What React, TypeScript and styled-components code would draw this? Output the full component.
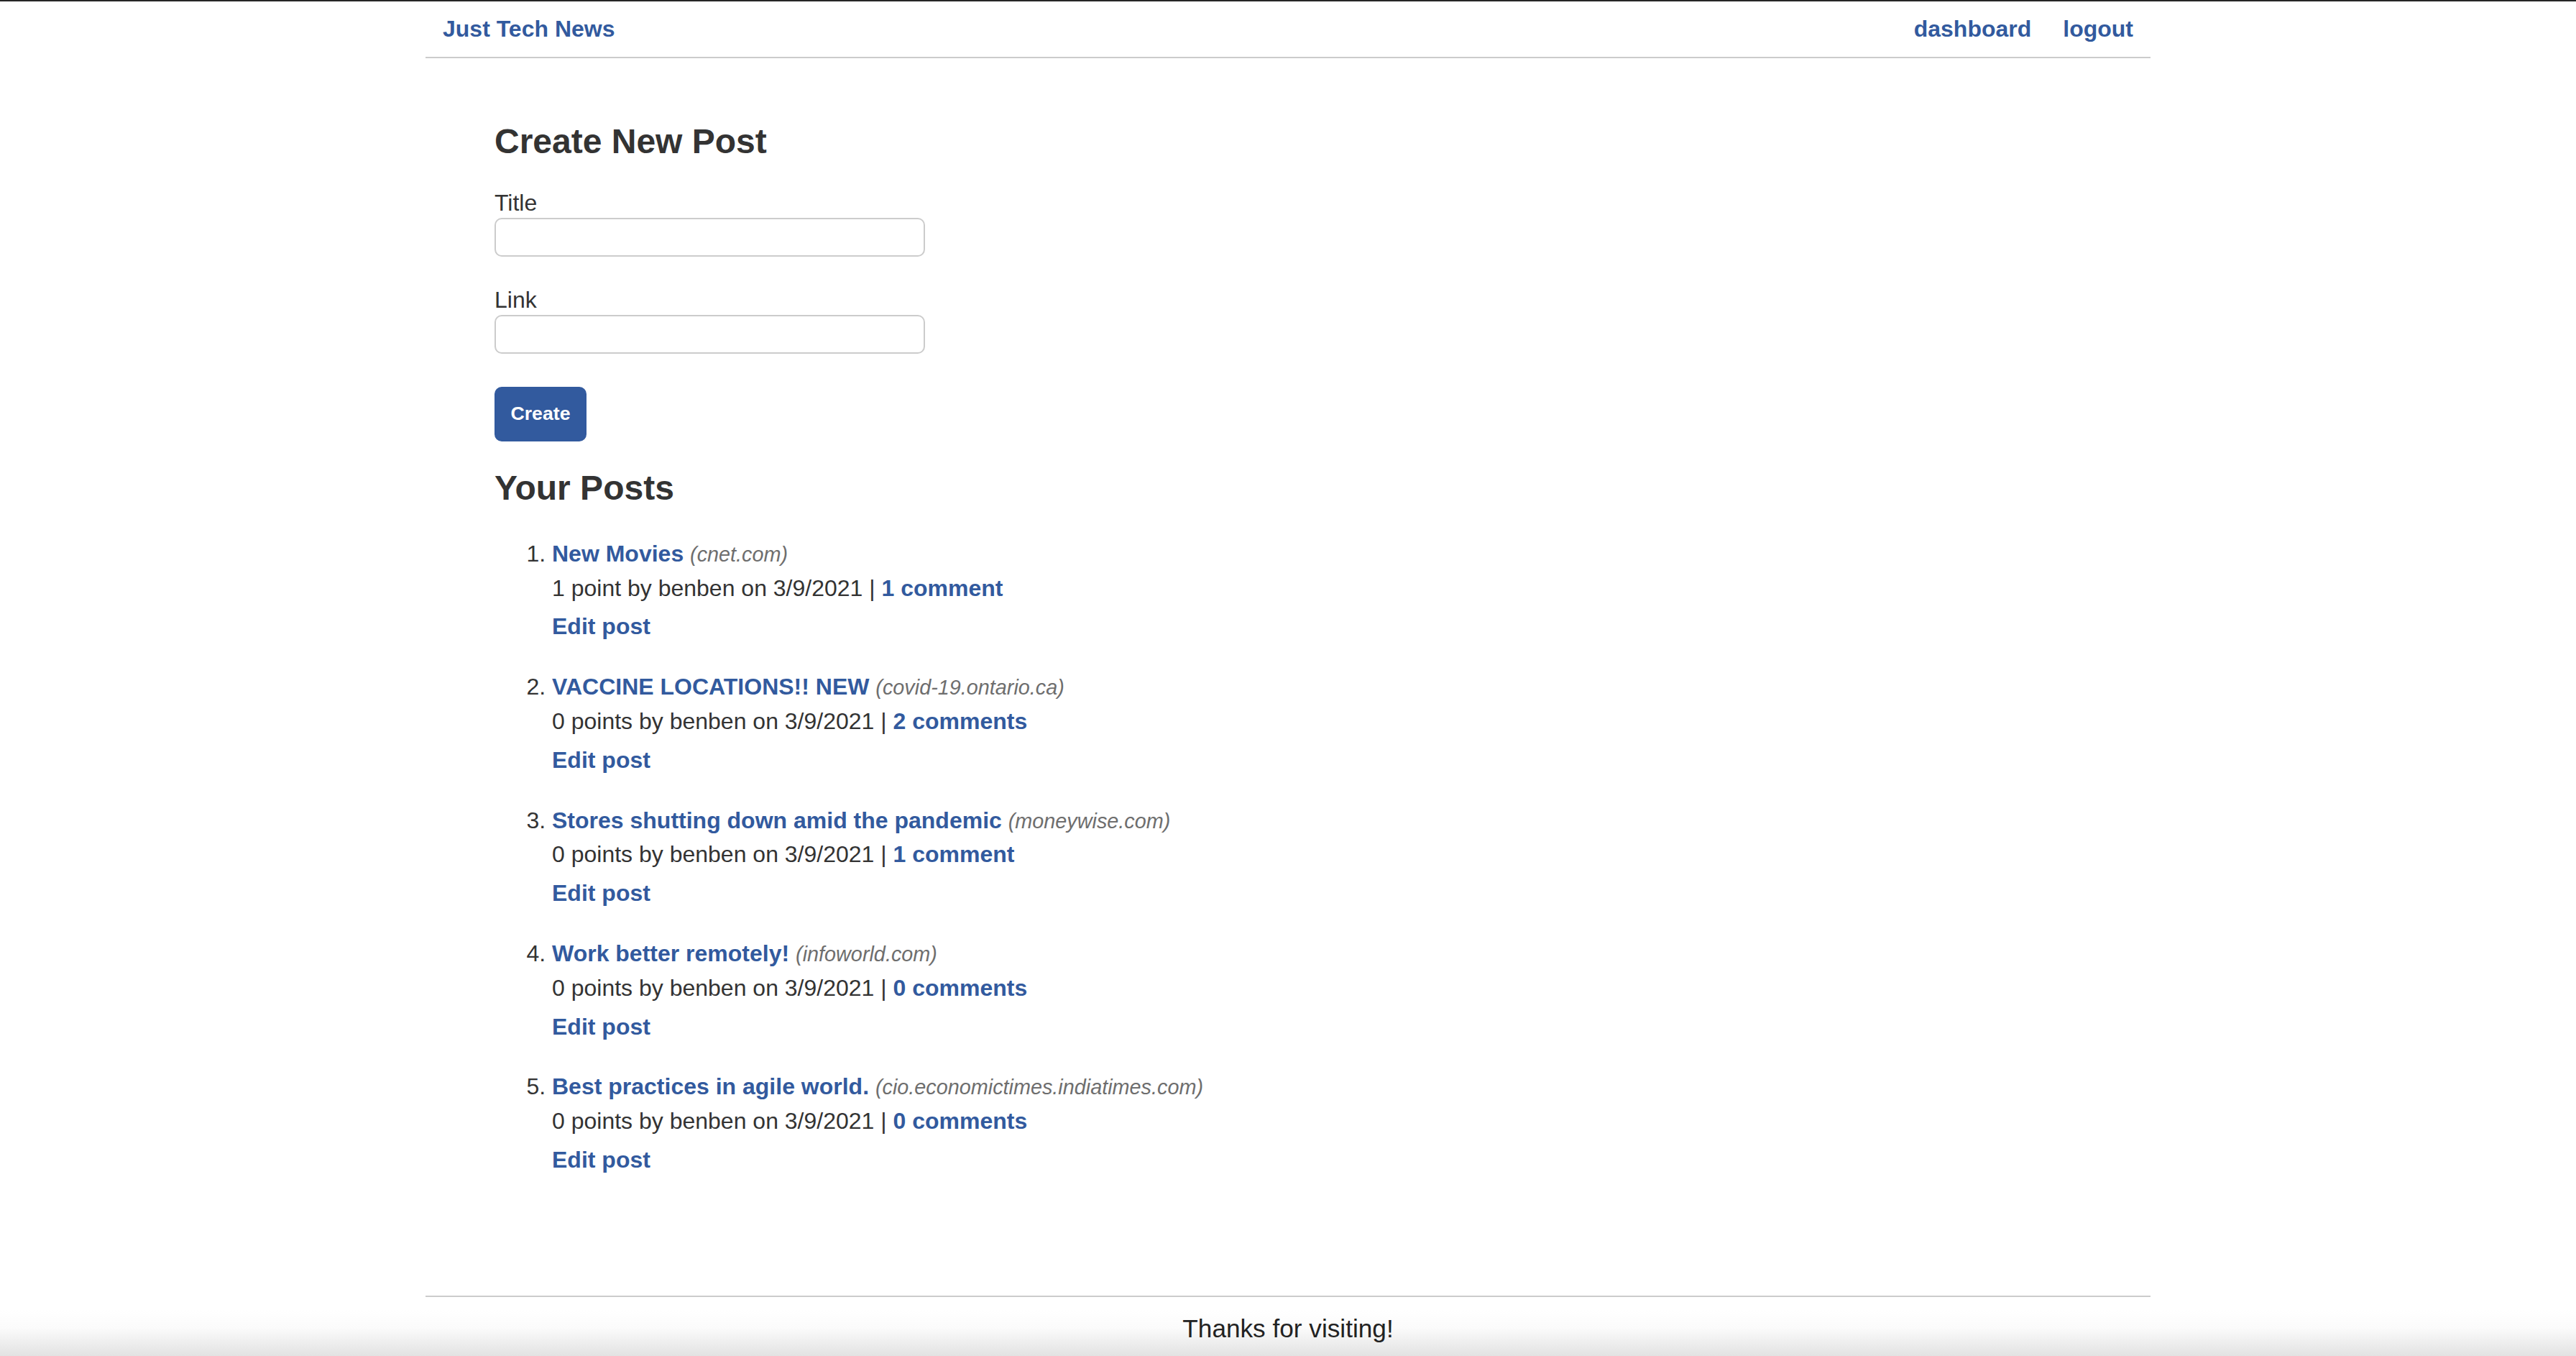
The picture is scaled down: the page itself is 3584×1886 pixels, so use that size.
import React from "react";
import styled, { createGlobalStyle } from "styled-components";

const GlobalStyle = createGlobalStyle`
  *, *::before, *::after { box-sizing: border-box; }
  html, body { margin: 0; padding: 0; background: #ffffff; }
  body {
    font-family: "Liberation Sans", Arial, Helvetica, sans-serif;
    font-size: 32px;
    line-height: 1.15;
    color: #333333;
  }
`;

const BLUE = "#325a9e";

const Page = styled.div`
  min-height: 100vh;
  display: flex;
  flex-direction: column;
  border-top: 2px solid #262626;
`;

const Header = styled.header`
  width: 2400px;
  margin: 0 auto;
  padding: 20px 24px 20px;
  display: flex;
  align-items: center;
  justify-content: space-between;
  border-bottom: 2px solid #cccccc;
`;

const Brand = styled.a`
  font-weight: bold;
  font-size: 32px;
  color: ${BLUE};
  text-decoration: none;
`;

const Nav = styled.nav`
  display: flex;
  gap: 44px;
`;

const NavLink = styled.a`
  font-weight: bold;
  font-size: 32px;
  color: ${BLUE};
  text-decoration: none;
`;

const Main = styled.main`
  flex: 1;
  width: 2400px;
  margin: 0 auto;
  padding: 88px 96px 0;
`;

const Heading = styled.h2<{ $top?: number }>`
  margin: ${(p) => p.$top ?? 0}px 0 0;
  font-size: 48px;
  font-weight: bold;
  line-height: 1.15;
  color: #333333;
`;

const Form = styled.form`
  margin-top: 40px;
  display: flex;
  flex-direction: column;
  align-items: flex-start;
`;

const Field = styled.div`
  margin-bottom: 42px;
  &:last-of-type { margin-bottom: 0; }
`;

const Label = styled.label`
  display: block;
  font-size: 32px;
  color: #333333;
`;

const Input = styled.input`
  display: block;
  margin-top: 2px;
  width: 599px;
  height: 54px;
  border: 2px solid #cccccc;
  border-radius: 10px;
  background: #ffffff;
  font-family: inherit;
  font-size: 26px;
  padding: 0 10px;
  outline: none;
`;

const Button = styled.button`
  margin-top: 46px;
  width: 128px;
  height: 76px;
  border: none;
  border-radius: 10px;
  background: ${BLUE};
  color: #ffffff;
  font-family: "Liberation Sans", Arial, Helvetica, sans-serif;
  font-weight: bold;
  font-size: 26.67px;
  cursor: pointer;
`;

const PostList = styled.ol`
  margin: 46px 0 0;
  padding-left: 80px;
  font-size: 32px;
  color: #333333;
`;

const PostItem = styled.li`
  line-height: 1.15;
  & + & { margin-top: 47px; }
`;

const TitleLine = styled.div``;

const PostLink = styled.a`
  font-weight: bold;
  color: ${BLUE};
  text-decoration: none;
`;

const Domain = styled.span`
  font-style: italic;
  font-size: 28.8px;
  color: #6e6e6e;
`;

const Meta = styled.div`
  margin-top: 11px;
  color: #333333;
`;

const MetaLink = styled.a`
  font-weight: bold;
  color: ${BLUE};
  text-decoration: none;
`;

const EditLink = styled.a`
  display: block;
  margin-top: 17px;
  font-weight: bold;
  color: ${BLUE};
  text-decoration: none;
  width: max-content;
`;

const FooterBand = styled.div`
  width: 100%;
  background: linear-gradient(
    to bottom,
    #ffffff 0px,
    #ffffff 20px,
    #fbfbfb 45px,
    #e2e2e2 100%
  );
`;

const Footer = styled.footer`
  width: 2400px;
  margin: 0 auto;
  border-top: 2px solid #cccccc;
  padding: 24px 0 18px;
  text-align: center;
  font-size: 35.2px;
  color: #222222;
`;

type Post = {
  title: string;
  domain: string;
  points: number;
  comments: number;
};

const posts: Post[] = [
  { title: "New Movies", domain: "cnet.com", points: 1, comments: 1 },
  { title: "VACCINE LOCATIONS!! NEW", domain: "covid-19.ontario.ca", points: 0, comments: 2 },
  { title: "Stores shutting down amid the pandemic", domain: "moneywise.com", points: 0, comments: 1 },
  { title: "Work better remotely!", domain: "infoworld.com", points: 0, comments: 0 },
  { title: "Best practices in agile world.", domain: "cio.economictimes.indiatimes.com", points: 0, comments: 0 },
];

export default function App() {
  return (
    <>
      <GlobalStyle />
      <Page>
        <Header>
          <Brand href="#">Just Tech News</Brand>
          <Nav>
            <NavLink href="#">dashboard</NavLink>
            <NavLink href="#">logout</NavLink>
          </Nav>
        </Header>
        <Main>
          <Heading>Create New Post</Heading>
          <Form onSubmit={(e) => e.preventDefault()}>
            <Field>
              <Label htmlFor="post-title">Title</Label>
              <Input id="post-title" type="text" />
            </Field>
            <Field>
              <Label htmlFor="post-url">Link</Label>
              <Input id="post-url" type="text" />
            </Field>
            <Button type="submit">Create</Button>
          </Form>
          <Heading $top={37}>Your Posts</Heading>
          <PostList>
            {posts.map((p) => (
              <PostItem key={p.title}>
                <TitleLine>
                  <PostLink href="#">{p.title}</PostLink>{" "}
                  <Domain>({p.domain})</Domain>
                </TitleLine>
                <Meta>
                  {p.points} {p.points === 1 ? "point" : "points"} by benben on 3/9/2021 |{" "}
                  <MetaLink href="#">
                    {p.comments} {p.comments === 1 ? "comment" : "comments"}
                  </MetaLink>
                </Meta>
                <EditLink href="#">Edit post</EditLink>
              </PostItem>
            ))}
          </PostList>
        </Main>
        <FooterBand>
          <Footer>Thanks for visiting!</Footer>
        </FooterBand>
      </Page>
    </>
  );
}
